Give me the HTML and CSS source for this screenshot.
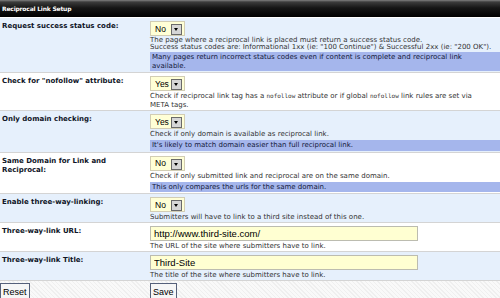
FILE: index.html
```html
<!DOCTYPE html>
<html lang="en">
<head>
    <meta charset="UTF-8">
    <title>Reciprocal Link Setup</title>
    <link rel="stylesheet" href="styles.css">
</head>
<body>
    <div class="setup">
        <div class="head">Reciprocal Link Setup</div>

        <div class="row alt">
            <div class="label">Request success status code:</div>
            <div class="field">
                <span class="sel"><select><option>No</option><option>Yes</option></select><span class="arrow"></span></span>
                <div class="desc tight">The page where a reciprocal link is placed must return a success status code.<br>Success status codes are: Informational 1xx (ie: "100 Continue") &amp; Successful 2xx (ie: "200 OK").</div>
                <div class="note">Many pages return incorrect status codes even if content is complete and reciprocal link<br>available.</div>
            </div>
        </div>

        <div class="row">
            <div class="label">Check for "nofollow" attribute:</div>
            <div class="field">
                <span class="sel"><select><option>Yes</option><option>No</option></select><span class="arrow"></span></span>
                <div class="desc loose">Check if reciprocal link tag has a <code>nofollow</code> attribute or if global <code>nofollow</code> link rules are set via<br>META tags.</div>
            </div>
        </div>

        <div class="row alt">
            <div class="label">Only domain checking:</div>
            <div class="field">
                <span class="sel"><select><option>Yes</option><option>No</option></select><span class="arrow"></span></span>
                <div class="desc">Check if only domain is available as reciprocal link.</div>
                <div class="note">It's likely to match domain easier than full reciprocal link.</div>
            </div>
        </div>

        <div class="row">
            <div class="label">Same Domain for Link and Reciprocal:</div>
            <div class="field">
                <span class="sel"><select><option>No</option><option>Yes</option></select><span class="arrow"></span></span>
                <div class="desc">Check if only submitted link and reciprocal are on the same domain.</div>
                <div class="note">This only compares the urls for the same domain.</div>
            </div>
        </div>

        <div class="row alt">
            <div class="label">Enable three-way-linking:</div>
            <div class="field">
                <span class="sel"><select><option>No</option><option>Yes</option></select><span class="arrow"></span></span>
                <div class="desc">Submitters will have to link to a third site instead of this one.</div>
            </div>
        </div>

        <div class="row">
            <div class="label">Three-way-link URL:</div>
            <div class="field">
                <input type="text" class="text" value="http://www.third-site.com/">
                <div class="desc">The URL of the site where submitters have to link.</div>
            </div>
        </div>

        <div class="row alt">
            <div class="label">Three-way-link Title:</div>
            <div class="field">
                <input type="text" class="text" value="Third-Site">
                <div class="desc">The title of the site where submitters have to link.</div>
            </div>
        </div>

        <div class="row buttons">
            <div><button class="btn" type="reset">Reset</button></div>
            <div><button class="btn" type="submit">Save</button></div>
        </div>
    </div>
</body>
</html>
```

FILE: styles.css
```css
body { margin: 0; background: #fff; font-family: "DejaVu Sans", Verdana, sans-serif; color: #222; }

.head { height: 17px; padding-left: 2px; background: linear-gradient(#808080 0, #3c3c3c 2px, #151515 8px, #000 100%); color: #fff; font-size: 6px; font-weight: bold; line-height: 17px; letter-spacing: -0.2px; border-bottom: 1px solid #fff; }

.row { display: grid; grid-template-columns: 150px 1fr; border-bottom: 1px solid #d4d4d4; }
.row.alt { background: #e6f0fc; }

.label { padding: 4px 2px 0; font-size: 7px; font-weight: bold; line-height: 9.5px; color: #0e1426; }
.field { min-width: 0; padding: 3px 0 1px; }

.sel { position: relative; display: block; width: 35px; }
.sel select { appearance: none; -webkit-appearance: none; display: block; width: 35px; height: 15px; margin: 0; padding: 0 0 0 4px; border: 1px solid #d2cdb4; border-radius: 0; background: #ffffd6; font-family: "Liberation Sans", Arial, sans-serif; font-size: 8.5px; color: #000; }
.arrow { position: absolute; top: 3px; right: 3px; width: 9px; height: 9px; border: 1px solid #6a6a6a; background: #d6d6d6; pointer-events: none; }
.arrow::after { content: ""; position: absolute; left: 2px; top: 3px; border-left: 2.5px solid transparent; border-right: 2.5px solid transparent; border-top: 3px solid #000; }

.desc { margin-top: 1px; font-size: 7px; line-height: 8px; color: #333; }
.desc.tight { line-height: 6.5px; }
.desc.loose { line-height: 8.5px; }
.desc code { font-family: "DejaVu Sans Mono", monospace; font-size: 6px; }

.note { margin-top: 2px; padding: 1px 0 1px 2px; background: #a5b6ec; font-size: 7px; line-height: 8.5px; color: #13183a; }

.text { display: block; box-sizing: border-box; width: 268px; height: 15px; margin: 0; padding: 0 3px; border: 1px solid #bcbcb0; background: #ffffd2; font-family: "Liberation Sans", Arial, sans-serif; font-size: 9.5px; color: #000; }

.buttons { border-bottom: none; padding-top: 2px; height: 20px; background: repeating-linear-gradient(45deg, #efefef 0 1px, #f9f9f9 1px 3px); }
.btn { display: block; height: 17px; margin: 0; padding: 0 2px; border: 1px solid #55607a; border-radius: 0; background: #f6f6f6; font-family: "Liberation Sans", Arial, sans-serif; font-size: 9px; color: #000; }
```
